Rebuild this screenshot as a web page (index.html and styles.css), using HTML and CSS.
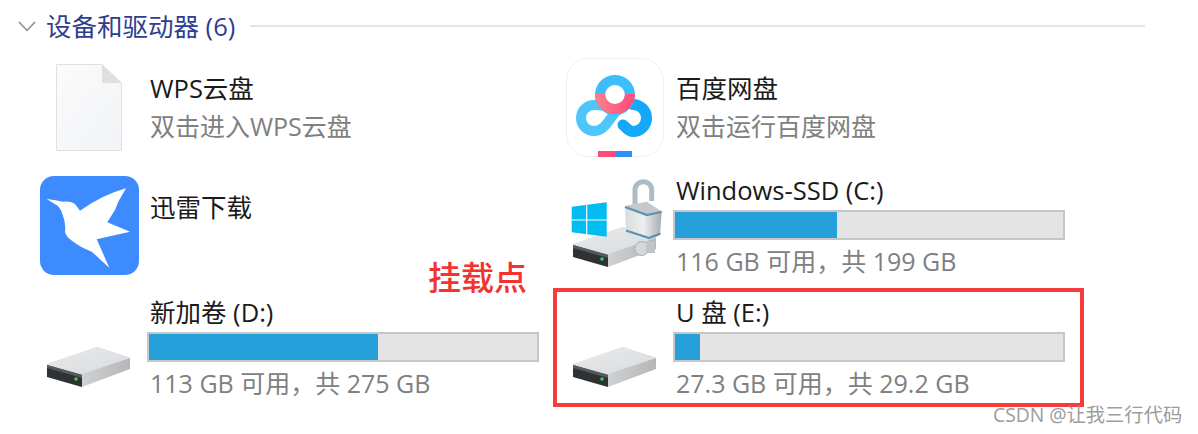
FILE: index.html
```html
<!DOCTYPE html>
<html lang="zh-CN">
  <head>
    <meta charset="UTF-8" />
    <title>设备和驱动器</title>
    <link rel="stylesheet" href="styles.css">
  </head>
  <body>
    <svg class="defs" width="0" height="0">
      <defs>
        <linearGradient id="driveTop" x1="0" y1="0" x2="1" y2="1">
          <stop offset="0" stop-color="#e9eaeb" />
          <stop offset="1" stop-color="#d9dbde" />
        </linearGradient>
        <linearGradient id="driveFront" x1="0" y1="0" x2="1" y2="0">
          <stop offset="0" stop-color="#e4e4e4" />
          <stop offset="1" stop-color="#b4b6b8" />
        </linearGradient>
        <linearGradient id="lockBody" x1="0" y1="0" x2="1" y2="0">
          <stop offset="0" stop-color="#d9dcde" />
          <stop offset="0.5" stop-color="#eeefef" />
          <stop offset="1" stop-color="#a8adb1" />
        </linearGradient>
        <linearGradient id="pageFill" x1="0" y1="0" x2="1" y2="1">
          <stop offset="0" stop-color="#fbfbfb" />
          <stop offset="1" stop-color="#f1f3f6" />
        </linearGradient>
        <linearGradient id="ringPink" x1="0" y1="0" x2="1" y2="0">
          <stop offset="0" stop-color="#ff7a8a" />
          <stop offset="1" stop-color="#f9527c" />
        </linearGradient>
        <g id="hdd">
          <path d="M7 66 L57 49 L90 60 L90 71 L42 89 L7 79 Z" fill="url(#driveFront)" />
          <path d="M7 66 L57 49 L90 60 L42 76 Z" fill="url(#driveTop)" />
          <path d="M7 67 L42 77 L42 89 L7 79 Z" fill="#2f3234" />
          <path d="M7 67 L42 77 L42 80 L7 70 Z" fill="#55595b" />
          <circle cx="36" cy="81" r="1.8" fill="#35d04a" />
        </g>
      </defs>
    </svg>

    <main class="explorer">
      <header class="group-head">
        <svg class="chevron" width="18" height="11" viewBox="0 0 18 11">
          <path d="M1 1 L9 9.5 L17 1" />
        </svg>
        <span class="group-title">设备和驱动器 (6)</span>
        <span class="group-line"></span>
      </header>

      <section class="tiles">
        <div class="tile">
          <svg class="tile-icon" viewBox="0 0 108 100">
            <path d="M16.5 6.5 H62 L81.5 25 V92.5 H16.5 Z" fill="url(#pageFill)" stroke="#e0e0e0" />
            <path d="M62 6.5 L81.5 25 H62 Z" fill="#dfdfdf" />
          </svg>
          <div class="tile-info app-info">
            <div class="tile-name">WPS云盘</div>
            <div class="tile-sub">双击进入WPS云盘</div>
          </div>
        </div>

        <div class="tile">
          <svg class="tile-icon" viewBox="0 0 108 100">
            <rect x="0.5" y="0.5" width="97" height="98" rx="22" fill="#fff" stroke="#efefef" />
            <g fill="none">
              <path d="M38 48 C34 47 31 47 28 47 A13 13 0 1 0 28 73 C40 73 44 58 52 52" stroke="#4cc6fb" stroke-width="10" />
              <path d="M67 46.5 A13.5 13.5 0 1 1 67 73.5 C62 73.5 60 69 57 67" stroke="#14a8fb" stroke-width="11" stroke-linecap="round" />
              <circle cx="49" cy="37" r="15" stroke="#3fbdfb" stroke-width="10" />
              <path d="M34 36 A15 15 0 0 0 64 36" stroke="url(#ringPink)" stroke-width="10" />
            </g>
            <rect x="32" y="93" width="17" height="6" fill="#ff4d79" />
            <rect x="49" y="93" width="17" height="6" fill="#2f8fff" />
          </svg>
          <div class="tile-info app-info">
            <div class="tile-name">百度网盘</div>
            <div class="tile-sub">双击运行百度网盘</div>
          </div>
        </div>

        <div class="tile">
          <svg class="tile-icon" viewBox="0 0 108 100">
            <rect x="0" y="-1" width="99" height="99" rx="14" fill="#3e8bff" />
            <path d="M6.7 22 Q16 23 23.3 24.7 Q31 23.5 35 27 L40 33.7 Q62 18 86 11.3 L78.3 24.7 L75 33 L67.3 45.3 L90 54.7 L56.7 62.3 L69.3 90.7 L51.7 74.7 Q40 70 33.3 64.7 Q26 60 25 54.7 Q26 46 22.7 38 Q21 32 18 29 Z" fill="#fff" />
          </svg>
          <div class="tile-info app-info">
            <div class="tile-name">迅雷下载</div>
          </div>
        </div>

        <div class="tile">
          <svg class="tile-icon" viewBox="0 0 108 100">
            <use href="#hdd" y="1" />
            <path d="M5.7 29.7 L40.7 25.3 V59.7 L5.7 55.3 Z" fill="#00bcf2" />
            <path d="M20.7 27.8 V57.8 M5.7 43 H40.7" stroke="#fff" stroke-width="1.2" />
            <path d="M69 28 V13 A8.3 8.3 0 0 1 85.7 13 V24" fill="none" stroke="#aebcc6" stroke-width="5" />
            <circle cx="75.7" cy="71.5" r="7" fill="#d5d8da" stroke="#a7abae" />
            <rect x="80" y="64" width="9" height="12" fill="#c2c5c8" />
            <path d="M59 29 L80.7 24.7 L95.7 34.7 L94 58 L84 63 L60 56.3 Z" fill="url(#lockBody)" />
            <path d="M59 29 L80.7 24.7 L95.7 34.7 L80 38 Z" fill="#c5c9cc" />
            <path d="M59 30 L81 38 L95.7 34.7 M60 53.5 L83 61 L94.5 56.5" fill="none" stroke="#5b93b8" stroke-width="2.2" />
          </svg>
          <div class="tile-info drive-info">
            <div class="tile-name">Windows-SSD (C:)</div>
            <div class="usage"><div class="usage-fill" style="width: 41.7%"></div></div>
            <div class="tile-sub">116 GB 可用，共 199 GB</div>
          </div>
        </div>

        <div class="tile">
          <svg class="tile-icon" viewBox="0 0 108 100">
            <use href="#hdd" y="-1" />
          </svg>
          <div class="tile-info drive-info">
            <div class="tile-name">新加卷 (D:)</div>
            <div class="usage"><div class="usage-fill" style="width: 58.9%"></div></div>
            <div class="tile-sub">113 GB 可用，共 275 GB</div>
          </div>
        </div>

        <div class="tile">
          <svg class="tile-icon" viewBox="0 0 108 100">
            <use href="#hdd" y="-1" />
          </svg>
          <div class="tile-info drive-info">
            <div class="tile-name">U 盘 (E:)</div>
            <div class="usage"><div class="usage-fill" style="width: 6.5%"></div></div>
            <div class="tile-sub">27.3 GB 可用，共 29.2 GB</div>
          </div>
        </div>
      </section>
    </main>

    <!-- Annotations drawn over the screenshot -->
    <div class="mark-label">挂载点</div>
    <div class="mark-box"></div>
    <div class="watermark">CSDN @让我三行代码</div>
  </body>
</html>
```

FILE: styles.css
```css
* {
  margin: 0;
  padding: 0;
  box-sizing: border-box;
  font-family: "Open Sans", "Noto Sans CJK SC", sans-serif;
}

body {
  position: relative;
  height: 434px;
  background-color: #fff;
  overflow: hidden;
}

.defs {
  position: absolute;
}

/* Group header */
.group-head {
  display: flex;
  align-items: center;
  height: 32px;
  margin: 10px 53px 16px 18px;
}

.chevron {
  flex: none;
  margin-right: 10px;
}

.chevron path {
  fill: none;
  stroke: #8a8a8a;
  stroke-width: 1.5;
}

.group-title {
  font-size: 25.5px;
  line-height: 32px;
  color: #2f3d8f;
  white-space: nowrap;
}

.group-line {
  flex: 1;
  height: 2px;
  margin-left: 15px;
  background-color: #e4e4e4;
}

/* Tiles */
.tiles {
  display: grid;
  grid-template-columns: 526px 526px;
  grid-template-rows: 119px 122px 110px;
  margin-left: 40px;
}

.tile {
  display: flex;
  align-items: flex-start;
}

.tile-icon {
  flex: none;
  width: 108px;
  height: 100px;
  overflow: visible;
  filter: blur(0.4px);
}

.tile-info {
  width: 391px;
}

.app-info {
  padding-top: 14px;
}

.tile-name,
.tile-sub {
  padding-left: 2px;
  line-height: 32px;
  white-space: nowrap;
}

.tile-name {
  font-size: 25.5px;
  color: #1a1a1a;
}

.tile-sub {
  font-size: 25px;
  color: #808080;
}

.app-info .tile-sub {
  margin-top: 6px;
}

.drive-info .tile-name {
  margin-top: -3px;
  margin-bottom: 4px;
}

.drive-info .tile-sub {
  margin-top: 5px;
}

.usage {
  height: 30px;
  margin-left: -1px;
  border: 2px solid #c6c6c6;
  background-color: #e4e4e4;
}

.usage-fill {
  height: 100%;
  background-color: #26a0da;
}

/* Annotations */
.mark-label {
  position: absolute;
  left: 428px;
  top: 257px;
  font-size: 33px;
  line-height: 42px;
  font-weight: 500;
  color: #f2332f;
}

.mark-box {
  position: absolute;
  left: 553px;
  top: 288px;
  width: 531px;
  height: 119px;
  border: 4px solid #f53b3b;
}

.watermark {
  position: absolute;
  left: 993px;
  top: 403px;
  font-size: 19.3px;
  line-height: 24px;
  color: #9c9c9c;
  white-space: nowrap;
}
```
